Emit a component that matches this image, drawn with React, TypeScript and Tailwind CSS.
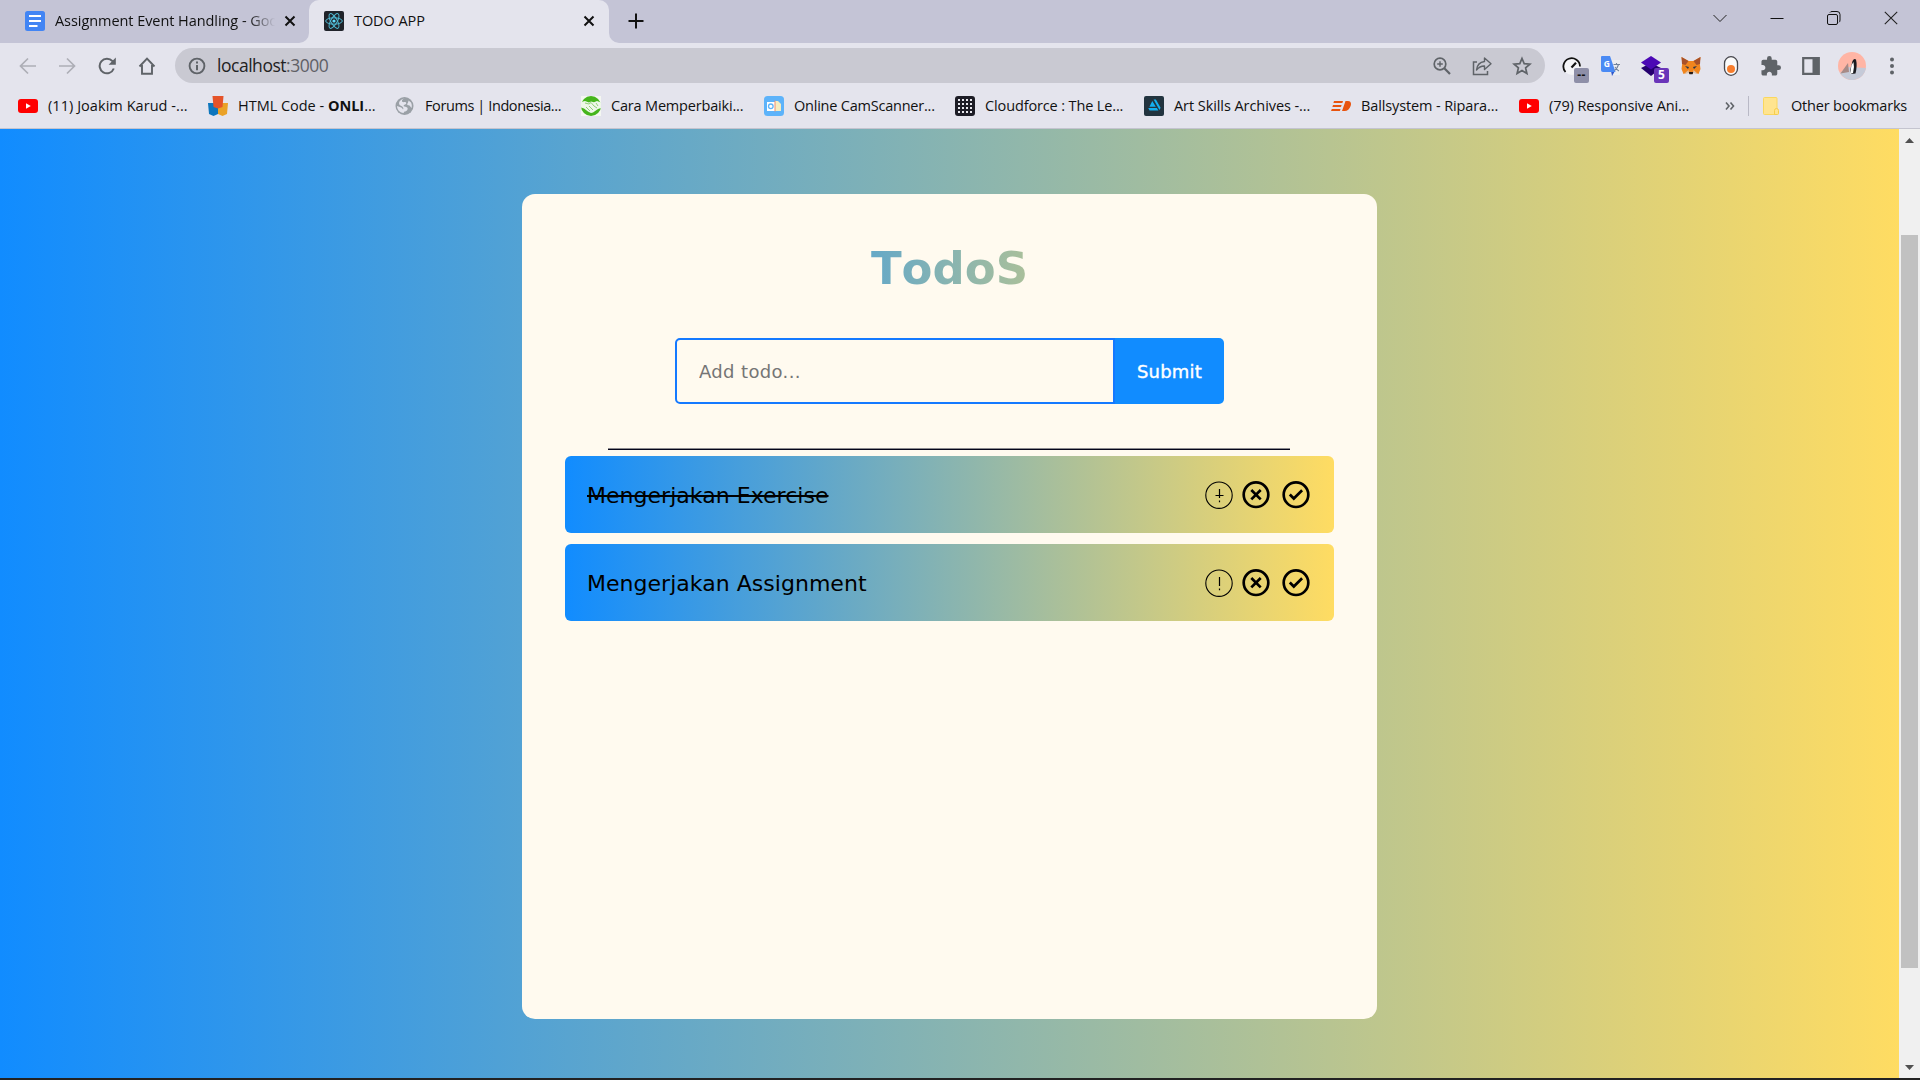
import React from "react";

const UI = "font-['Open_Sans','Noto_Sans',sans-serif]";

function YouTube() {
  return (
    <svg viewBox="0 0 20 20" className="size-5 shrink-0">
      <rect y="3" width="20" height="14" rx="3" fill="#f00" />
      <path d="M8 7.2v5.6l4.8-2.8z" fill="#fff" />
    </svg>
  );
}
function Shields() {
  return (
    <svg viewBox="0 0 20 20" className="size-5 shrink-0">
      <path d="M0 7h10v11l-4.500 2L1 18z" fill="#0d76bd" />
      <path d="M10 7h10l-1 11-4.500 2L10 18z" fill="#eaa228" />
      <path d="M4.500 0h11l-1 11-4.500 1.500L5.500 11z" fill="#e5532a" />
    </svg>
  );
}
function Globe() {
  return (
    <svg viewBox="0 0 20 20" className="size-5 shrink-0">
      <circle cx="9.500" cy="10" r="9" fill="#9aa0a6" />
      <path d="M10 2.500c-3 .5-3.500 2-2.500 3.500 1 .5 2.500-.5 3.500.5s-.5 2-2 2.500c-1 1 0 1.500 1.500 1.700 2 .3 2.500 1.500 2 2.800-.5 1.500-2 2-3 2l-1 1.500C4.500 16.500 2 13.500 2 10l3.500 1.200c1 .3 2 1 2.500 2.300 1-1 0-2.500-1.500-3.500C4 9 3.500 7.500 4.500 5.500 6 3.500 8 2.500 10 2.500z" fill="#e4e4ed" />
      <path d="M13.500 4.500l2.500 2c1 2 1 4 .5 5.500l-2-2.500-2-.5c-1-1 1-2 1-4.500z" fill="#e4e4ed" />
    </svg>
  );
}
function Hands() {
  return (
    <svg viewBox="0 0 20 20" className="size-5 shrink-0">
      <path d="M0 0h20v20H0z" fill="#f4f7f1" />
      <circle cx="10" cy="10" r="10" fill="#45b51c" />
      <path d="M0 6l4-1 4 1.500L10 5.500l3 .8L16 5l4 1.500v5.500l-3 1-5 3.500-2 .5-3-1.500-4-3-3-1z" fill="#eef7e9" />
      <path d="M4 7l4 1 2-1.500L13 10l3 2M5 11l4 4M8 10l4 4M15 7l2 3" fill="none" stroke="#77c45b" strokeWidth=".8" />
    </svg>
  );
}
function Camera() {
  return (
    <svg viewBox="0 0 20 20" className="size-5 shrink-0">
      <rect width="20" height="20" rx="3.500" fill="#5db3fa" />
      <path d="M3 6h8v9H3z" fill="#fff" />
      <path d="M11 5h3l3 3v7h-6z" fill="#f5ecc0" />
      <path d="M11 4.500v11" stroke="#ee8b74" strokeWidth="1" />
      <circle cx="6.800" cy="10.300" r="2.300" fill="none" stroke="#5db3fa" strokeWidth="1.300" />
    </svg>
  );
}
function DotGrid() {
  return (
    <svg viewBox="0 0 20 20" className="size-5 shrink-0">
      <rect width="20" height="20" rx="3" fill="#1d1d26" />
      {[3.5, 7.5, 11.5, 15.5].map((y) =>
        [3.5, 7.5, 11.5, 15.5].map((x) => <rect key={`${x}-${y}`} x={x - 0.5} y={y - 0.5} width="2" height="2" fill="#e8e8ee" />)
      )}
    </svg>
  );
}
function ArtStation() {
  return (
    <svg viewBox="0 0 20 20" className="size-5 shrink-0">
      <rect width="20" height="20" rx="2" fill="#22343f" />
      <path d="M8.300 5l3.500 5.700H5.400zM4.200 12h8.700l1.500 2.600H5.600zM9.600 3.500h2.300l4.700 8.200-1.100 2.200z" fill="#13aff0" />
    </svg>
  );
}
function Ballsystem() {
  return (
    <svg viewBox="0 0 20 20" className="size-5 shrink-0">
      <path d="M3 5h9l-.6 2H2.400zM2 9h8.600l-.6 2H1.400zM.8 13h8.700l-.6 2H0zM14.500 5H17c3 0 3.500 2.500 2.600 5-1 3-3.200 5-6 5H11z" fill="#e8530e" />
    </svg>
  );
}

const bookmarks = [
  { icon: <YouTube />, w: "w-[190px]", text: "(11) Joakim Karud -...", t: "tracking-[0.05px]" },
  { icon: <Shields />, w: "w-[187px]", text: "", t: "tracking-[-0.02px]" },
  { icon: <Globe />, w: "w-[186px]", text: "Forums | Indonesia...", t: "tracking-[-0.4px]" },
  { icon: <Hands />, w: "w-[183px]", text: "Cara Memperbaiki...", t: "tracking-[-0.18px]" },
  { icon: <Camera />, w: "w-[191px]", text: "Online CamScanner...", t: "tracking-[-0.22px]" },
  { icon: <DotGrid />, w: "w-[189px]", text: "Cloudforce : The Le...", t: "tracking-[-0.13px]" },
  { icon: <ArtStation />, w: "w-[187px]", text: "Art Skills Archives -...", t: "tracking-[-0.07px]" },
  { icon: <Ballsystem />, w: "w-[188px]", text: "Ballsystem - Ripara...", t: "tracking-[-0.12px]" },
  { icon: <YouTube />, w: "w-[206px]", text: "(79) Responsive Ani...", t: "tracking-[-0.09px]" },
];

function CloseX() {
  return (
    <svg viewBox="0 0 12 12" className="size-3 shrink-0">
      <path d="M1.500 1.500l9 9m0-9l-9 9" stroke="#111" strokeWidth="2" />
    </svg>
  );
}

function TabStrip() {
  return (
    <div className="flex h-[43px] bg-[#c4c4d6]">
      <div className="flex h-[42px] w-[309px] items-center pl-[25px]">
        <svg viewBox="0 0 20 20" className="size-5 shrink-0">
          <rect width="20" height="20" rx="2.500" fill="#4285f4" />
          <path d="M4 5h12M4 10h12M4 15h8.500" stroke="#fff" strokeWidth="2.200" />
        </svg>
        <div className="ml-[10px] w-[220px] overflow-hidden whitespace-nowrap text-[14.500px] leading-5 tracking-[-0.06px] text-[#111] mask-r-from-88%">
          Assignment Event Handling - Goo
        </div>
        <div className="ml-[9px]"><CloseX /></div>
      </div>
      <div className="relative h-[43px] w-[300px] rounded-t-[10px] bg-[#e4e4ed]">
        <svg viewBox="0 0 10 10" className="absolute bottom-0 -left-[10px] size-[10px]"><path d="M10 0v10H0A10 10 0 0 0 10 0" fill="#e4e4ed" /></svg>
        <svg viewBox="0 0 10 10" className="absolute bottom-0 -right-[10px] size-[10px]"><path d="M0 0v10h10A10 10 0 0 1 0 0" fill="#e4e4ed" /></svg>
        <div className="flex h-[42px] items-center pl-[15px]">
          <svg viewBox="0 0 20 20" className="size-5 shrink-0">
            <rect width="20" height="20" rx="2" fill="#20232a" />
            <g fill="none" stroke="#4fb9d3" strokeWidth="1">
              <ellipse cx="10" cy="10" rx="8.300" ry="3.200" />
              <ellipse cx="10" cy="10" rx="8.300" ry="3.200" transform="rotate(60 10 10)" />
              <ellipse cx="10" cy="10" rx="8.300" ry="3.200" transform="rotate(120 10 10)" />
            </g>
            <circle cx="10" cy="10" r="1.600" fill="#61dafb" />
          </svg>
          <div className="ml-[10px] w-[220px] text-[14.500px] tracking-[-0.08px] text-[#111]">TODO APP</div>
          <div className="ml-[9px]"><CloseX /></div>
        </div>
      </div>
      <svg viewBox="0 0 16 16" className="mt-[13px] ml-[19px] size-4">
        <path d="M8 .5v15M.5 8h15" stroke="#111" strokeWidth="2" />
      </svg>
      <div className="ml-auto flex gap-[43px] pt-[11px] pr-[22px]">
        <svg viewBox="0 0 14 14" className="size-[14px]"><path d="M.5 4L7 10.500 13.500 4" fill="none" stroke="#222" /></svg>
        <svg viewBox="0 0 14 14" className="size-[14px]"><path d="M.5 7.500h13" stroke="#111" /></svg>
        <svg viewBox="0 0 14 14" className="size-[14px]"><rect x=".5" y="3.500" width="10" height="10" rx="1.500" fill="none" stroke="#111" /><path d="M3 1.500q.5-1 2-1h5q3 0 3 3V9q0 1.700-1 2.300" fill="none" stroke="#111" /></svg>
        <svg viewBox="0 0 14 14" className="size-[14px]"><path d="M.8.800l12.400 12.400m0-12.400L.8 13.200" stroke="#222" strokeWidth="1.100" /></svg>
      </div>
    </div>
  );
}

function Extensions() {
  return (
    <div className="flex items-center">
      <div className="relative ml-[17px] size-5">
        <svg viewBox="0 0 20 20" className="size-5"><circle cx="10" cy="10" r="9" fill="#f4f4f7" /><path d="M3.500 16A8.300 8.300 0 1 1 18 10.500" fill="none" stroke="#111" strokeWidth="1.800" /><path d="M9.500 11.500L14 6.800" stroke="#111" strokeWidth="2.200" /></svg>
        <div className="absolute top-[12px] left-[12px] flex h-[15px] w-[15px] items-center justify-center rounded-[2px] bg-[#8e8fa8] text-[12px] font-bold tracking-[0.5px] text-[#111]">--</div>
      </div>
      <svg viewBox="0 0 20 20" className="ml-[19px] size-5">
        <path d="M8 4h11v15H10z" fill="#eceef0" /><path d="M10 15h4l-3 5z" fill="#3057c8" />
        <path d="M1 0h8l5.500 16H2q-2 0-2-2V1q0-1 1-1z" fill="#4a8af4" />
        <text x="2.800" y="11" fontSize="8.500" fontWeight="700" fill="#fff">G</text>
        <path d="M12.500 8.500h6.500M15.500 7v1.500M17.500 8.500q-1 4-4 6M14 11q2 3 4 4" stroke="#73849a" strokeWidth="1.100" fill="none" />
      </svg>
      <div className="relative ml-5 size-5">
        <svg viewBox="0 0 20 20" className="size-5"><path d="M0 12l10-5 10 5-10 8z" fill="#24006e" /><path d="M0 6.500L10 0l10 6.500-10 7z" fill="#4b08b5" /></svg>
        <div className="absolute top-[12px] left-[13px] flex h-[15px] w-[15px] items-center justify-center rounded-[2px] bg-[#6a35b9] text-[12px] font-bold text-white">5</div>
      </div>
      <svg viewBox="0 0 20 20" className="ml-5 size-5">
        <path d="M.5 1l7 4h5l7-4-.8 6 .8 6-2 5-5-1.500-1.500 1.500H9l-1.500-1.500-5 1.500-2-5 .8-6z" fill="#f0851e" />
        <path d="M.5 1l7 4-3 4L1 8zM19.500 1l-7 4 3 4 3.500-1z" fill="#a85128" />
        <path d="M4 10l4 1-1 2zM16 10l-4 1 1 2z" fill="#273549" /><path d="M7.500 16h5l-1 2.300h-3z" fill="#261c18" /><path d="M3 18l4.500-4 .5 3zM17 18l-4.500-4-.5 3z" fill="#dfc1a6" />
      </svg>
      <svg viewBox="0 0 20 20" className="ml-5 size-5"><rect x="3.500" y=".7" width="13" height="18.600" rx="6.500" fill="#fafafa" stroke="#47474d" strokeWidth="1.300" /><circle cx="10" cy="13" r="4" fill="#f77d2d" /></svg>
      <svg viewBox="1.500 1 21.500 21.500" className="ml-5 size-5" fill="#5f6368"><path d="M20.500 11H19V7c0-1.100-.9-2-2-2h-4V3.500a2.500 2.500 0 0 0-5 0V5H4c-1.100 0-1.990.9-1.990 2v3.800H3.500c1.490 0 2.700 1.210 2.700 2.700s-1.210 2.700-2.700 2.700H2V20c0 1.100.9 2 2 2h3.800v-1.500c0-1.490 1.210-2.700 2.700-2.700s2.700 1.210 2.700 2.700V22H17c1.100 0 2-.9 2-2v-4h1.500a2.500 2.500 0 0 0 0-5z" /></svg>
      <svg viewBox="0 0 20 20" className="ml-5 size-5"><path d="M2.200 2.200h15.600v15.600H2.200z" fill="none" stroke="#5f6368" strokeWidth="2.200" /><path d="M11.500 2h6.500v16h-6.500z" fill="#5f6368" /></svg>
      <svg viewBox="0 0 28 28" className="ml-[17px] size-7">
        <circle cx="14" cy="14" r="14" fill="#ffb5a5" />
        <path d="M2 21l7-6 19 1a14 14 0 0 1-26 5z" fill="#c5cad8" /><path d="M2.500 21.500L10 11l1 9z" fill="#a78a86" />
        <path d="M13 22q-2-1 0-7l1.500-6q1.500-3 3.500-1.500 1.500 6-.5 14z" fill="#1b1b20" /><path d="M12 22l1.500-9 2-3q1.200 5-.5 11z" fill="#fff" />
      </svg>
      <svg viewBox="0 0 20 20" className="ml-4 size-5" fill="#5f6368"><circle cx="10" cy="3.500" r="2" /><circle cx="10" cy="10" r="2" /><circle cx="10" cy="16.500" r="2" /></svg>
    </div>
  );
}

function Toolbar() {
  return (
    <div className="flex h-[45px] items-center bg-[#e4e4ed]">
      <svg viewBox="0 0 18 18" className="ml-[19px] size-[18px]"><path d="M17 9H2m7-7.500L1.500 9 9 16.500" fill="none" stroke="#adaeb6" strokeWidth="1.700" /></svg>
      <svg viewBox="0 0 18 18" className="ml-[21px] size-[18px]"><path d="M1 9h15M9 1.500L16.500 9 9 16.500" fill="none" stroke="#adaeb6" strokeWidth="1.700" /></svg>
      <svg viewBox="0 0 18 18" className="ml-[22px] size-[18px]"><path d="M15.800 11.500A7.300 7.300 0 1 1 14.500 4.200l1.500 2" fill="none" stroke="#5f6368" strokeWidth="2" /><path d="M17.800.5v7.200h-7.200z" fill="#5f6368" /></svg>
      <svg viewBox="0 0 18 18" className="ml-[22px] size-[18px]"><path d="M1.500 9.500L9 1.700l7.500 7.800M4 8v8.800h10V8" fill="none" stroke="#5f6368" strokeWidth="1.900" /></svg>
      <div className="ml-[19px] flex h-[35px] w-[1370px] items-center rounded-full bg-[#c9c9d2] pr-[13px] pl-[13px]">
        <svg viewBox="0 0 18 18" className="size-[18px]"><circle cx="9" cy="9" r="7.400" fill="none" stroke="#5f6368" strokeWidth="1.900" /><path d="M9 8v5.200M9 4.500v2" stroke="#5f6368" strokeWidth="2" /></svg>
        <span className="ml-[11px] text-[17.500px] tracking-[-0.47px] text-[#222]">localhost<span className="text-[#606066]">:3000</span></span>
        <svg viewBox="0 0 20 20" className="ml-auto size-5"><circle cx="8" cy="8" r="5.800" fill="none" stroke="#5f6368" strokeWidth="1.700" /><path d="M12.300 12.300L18 18" stroke="#5f6368" strokeWidth="2.200" /><path d="M5.200 8h5.600M8 5.200v5.600" stroke="#5f6368" strokeWidth="1.400" /></svg>
        <svg viewBox="0 0 20 20" className="ml-5 size-5"><path d="M5 6H1.500v12.500h14V15" fill="none" stroke="#5f6368" strokeWidth="1.500" /><path d="M12.500 2l6.500 5.800-6.500 5.700V10Q8 9.800 4.500 14q.8-7.500 8-8.500z" fill="none" stroke="#5f6368" strokeWidth="1.400" strokeLinejoin="round" /></svg>
        <svg viewBox="0 0 20 20" className="ml-5 size-5"><path d="M10 2.500l2.200 5.200 5.700.5-4.300 3.700 1.300 5.600L10 14.500l-4.900 3 1.300-5.600L2.100 8.200l5.700-.5z" fill="none" stroke="#5f6368" strokeWidth="1.700" /></svg>
      </div>
      <Extensions />
    </div>
  );
}

function BookmarkBar() {
  return (
    <div className="flex h-[41px] items-center border-b border-[#c4c4cf] bg-[#e4e4ed] pb-1 pl-[18px] text-[14.500px] whitespace-nowrap text-[#111]">
      {bookmarks.map((b, i) => (
        <div key={i} className={`flex shrink-0 items-center gap-[10px] ${b.w} ${b.t}`}>
          {b.icon}
          <span>{b.text || <>HTML Code - <b>ONLI</b>...</>}</span>
        </div>
      ))}
      <svg viewBox="0 0 10 10" className="size-[10px]"><path d="M1 1.500L4 5 1 8.500M5.500 1.500l3 3.500-3 3.500" fill="none" stroke="#5f6368" strokeWidth="1.600" /></svg>
      <div className="ml-[13px] h-5 w-px bg-[#b9b9c6]" />
      <svg viewBox="0 0 16 18" className="ml-[14px] h-[18px] w-4"><rect x=".5" y=".5" width="13.500" height="17" rx="1" fill="#ffe48f" stroke="#fad75e" /><path d="M11.500 17.500v-4q0-2 2-2t2 2v3q0 1-1 1z" fill="#ffe48f" stroke="#f6cd4c" /></svg>
      <span className="ml-3 tracking-[-0.2px]">Other bookmarks</span>
    </div>
  );
}

function TodoItem({ text, done, className }: { text: string; done?: boolean; className: string }) {
  return (
    <div className={`flex h-[77px] items-center rounded-[6px] bg-[linear-gradient(90deg,#118cff,#ffdc62)] pr-6 pl-[22px] ${className}`}>
      <span className={`pt-[2px] text-[22px] tracking-[0.03px] text-black ${done ? "line-through decoration-2" : ""}`}>{text}</span>
      <svg viewBox="0 0 28 28" className="ml-auto size-7">
        <circle cx="14" cy="14.200" r="13.200" fill="none" stroke="#000" strokeWidth="1.100" />
        <path d="M14.500 8v9M14.500 19.500v1.700" stroke="#000" strokeWidth="1.200" />
        {done && <path d="M10.500 14.500h8" stroke="#000" />}
      </svg>
      <svg viewBox="0 0 28 28" className="ml-[9px] size-7"><circle cx="14" cy="13.700" r="12.300" fill="none" stroke="#000" strokeWidth="2.700" /><path d="M9.300 9l9.400 9.400m0-9.400l-9.400 9.400" stroke="#000" strokeWidth="2.700" /></svg>
      <svg viewBox="0 0 28 28" className="ml-3 size-7"><circle cx="14" cy="13.700" r="12.300" fill="none" stroke="#000" strokeWidth="2.700" /><path d="M7.800 13.500l4 4 8.300-8.200" fill="none" stroke="#000" strokeWidth="2.700" /></svg>
    </div>
  );
}

export default function App() {
  return (
    <div className={`flex h-[1080px] w-[1920px] flex-col overflow-hidden border-b-2 border-[#222] ${UI}`}>
      <TabStrip />
      <Toolbar />
      <BookmarkBar />
      <div className="flex min-h-0 flex-1">
        <main className="w-[1899px] bg-[linear-gradient(90deg,#118cff,#ffdc62)] pt-[65px] pl-[522px] font-['DejaVu_Sans',sans-serif]">
          <section className="flex h-[825px] w-[855px] flex-col items-center rounded-[13px] bg-[#fffaef] pt-[43px]">
            <h1 className="w-[549px] bg-[linear-gradient(90deg,#118cff,#ffdc62)] bg-clip-text text-center text-[45px] leading-[64px] font-bold text-transparent [font-kerning:none]">TodoS</h1>
            <form className="mt-[37px] flex h-[66px] w-[549px]">
              <input placeholder="Add todo..." className="w-[440px] rounded-l-[5px] border-2 border-[#1479ff] bg-transparent pl-[22px] text-[18px] tracking-[0.35px] outline-none placeholder:text-[#757575]" />
              <button type="button" className="flex-1 rounded-r-[5px] bg-[#118cff] text-[18px] tracking-[0.2px] text-white [-webkit-text-stroke:0.4px_white]">Submit</button>
            </form>
            <div className="mt-11 mr-px h-[2px] w-[682px] border-t border-[#8b8a8e] bg-[#05051a]" />
            <div className="mt-[6px] w-[769px]">
              <TodoItem done text="Mengerjakan Exercise" className="" />
              <TodoItem text="Mengerjakan Assignment" className="mt-[11px]" />
            </div>
          </section>
        </main>
        <aside className="flex w-[21px] flex-col items-center bg-[#f0f0f0]">
          <svg viewBox="0 0 9 5" className="mt-[9px] h-[5px] w-[9px]"><path d="M0 5L4.500 0 9 5z" fill="#505050" /></svg>
          <div className="mt-[92px] h-[733px] w-[17px] bg-[#c1c1c1]" />
          <svg viewBox="0 0 9 5" className="mt-[97px] h-[5px] w-[9px]"><path d="M0 0h9L4.500 5z" fill="#505050" /></svg>
        </aside>
      </div>
    </div>
  );
}
